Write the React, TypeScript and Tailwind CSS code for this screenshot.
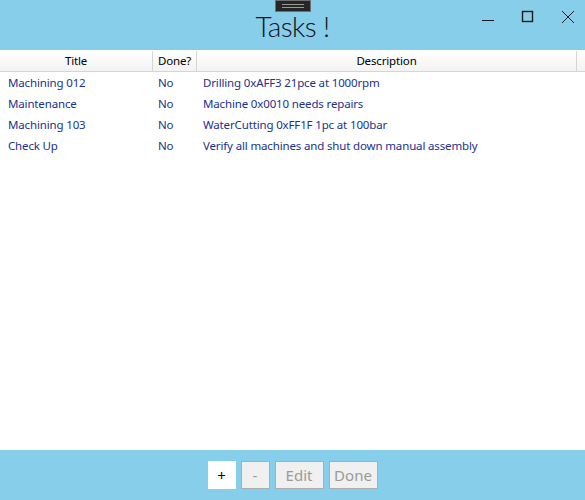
import { Fragment } from "react";

const tasks = [
  { title: "Machining 012", done: "No", description: "Drilling 0xAFF3 21pce at 1000rpm" },
  { title: "Maintenance", done: "No", description: "Machine 0x0010 needs repairs" },
  { title: "Machining 103", done: "No", description: "WaterCutting 0xFF1F 1pc at 100bar" },
  { title: "Check Up", done: "No", description: "Verify all machines and shut down manual assembly" },
];

function WindowControls() {
  return (
    <div className="absolute right-[-3px] top-0 flex h-[34px] items-center">
      <div className="flex h-full w-[40px] items-center justify-center">
        <svg width="14" height="14" viewBox="0 0 14 14">
          <path d="M1 10.5h12" stroke="#1a1a1a" strokeWidth="1" />
        </svg>
      </div>
      <div className="flex h-full w-[40px] items-center justify-center">
        <svg width="14" height="14" viewBox="0 0 14 14">
          <rect x="1.5" y="1.5" width="10" height="10" fill="none" stroke="#1a1a1a" strokeWidth="1.4" />
        </svg>
      </div>
      <div className="flex h-full w-[40px] items-center justify-center">
        <svg width="14" height="14" viewBox="0 0 14 14">
          <path d="M1 1l12 12M13 1L1 13" stroke="#1a1a1a" strokeWidth="1" />
        </svg>
      </div>
    </div>
  );
}

export default function App() {
  return (
    <div
      className="flex h-[500px] w-[585px] flex-col bg-white"
      style={{ fontFamily: '"Noto Sans", "Open Sans", sans-serif' }}
    >
      {/* title bar */}
      <div className="relative flex h-[50px] shrink-0 items-start justify-center bg-[#87ceeb]">
        <div className="absolute left-[275px] top-0 flex h-[12px] w-[36px] flex-col items-center justify-center gap-[2px] border border-[#6e6e6e] bg-[#262626]">
          <div className="h-px w-[22px] bg-[#9a9a9a]" />
          <div className="h-px w-[22px] bg-[#9a9a9a]" />
        </div>
        <div
          className="mt-[8px] text-[28px] font-light leading-[36px] tracking-[-0.6px] text-[#111]"
          style={{ fontFamily: 'Lato, "Noto Sans", sans-serif' }}
        >
          Tasks !
        </div>
        <WindowControls />
      </div>

      {/* grid */}
      <div className="flex-1 pt-px">
        <div className="grid grid-cols-[153px_44px_380px_8px] text-[11.5px] tracking-[-0.15px]">
          <div className="flex h-[21px] items-center justify-center border-b border-r border-[#d5d5d5] bg-gradient-to-b from-white to-[#f3f3f3] text-black">
            Title
          </div>
          <div className="flex h-[21px] items-center justify-center border-b border-r border-[#d5d5d5] bg-gradient-to-b from-white to-[#f3f3f3] text-black">
            Done?
          </div>
          <div className="flex h-[21px] items-center justify-center border-b border-r border-[#d5d5d5] bg-gradient-to-b from-white to-[#f3f3f3] text-black">
            Description
          </div>
          <div className="h-[21px] border-b border-[#d5d5d5] bg-gradient-to-b from-white to-[#f3f3f3]" />
          {tasks.map((t) => (
            <Fragment key={t.title}>
              <div className="flex h-[21px] items-center pl-[8px] text-[#1b318c]">{t.title}</div>
              <div className="flex h-[21px] items-center pl-[5px] text-[#1b318c]">{t.done}</div>
              <div className="flex h-[21px] items-center whitespace-nowrap pl-[6px] text-[#1b318c]">{t.description}</div>
              <div />
            </Fragment>
          ))}
        </div>
      </div>

      {/* bottom bar */}
      <div className="flex h-[50px] shrink-0 items-center justify-center gap-[5px] bg-[#87ceeb] text-[15px]">
        <button className="flex h-[28px] w-[28px] items-center justify-center bg-white text-black">+</button>
        <button className="flex h-[28px] w-[29px] items-center justify-center border border-[#adadad] bg-[#f0f0f0] text-[#9a9a9a]">
          -
        </button>
        <button className="flex h-[28px] w-[49px] items-center justify-center border border-[#adadad] bg-[#f0f0f0] text-[#9a9a9a]">
          Edit
        </button>
        <button className="flex h-[28px] w-[49px] items-center justify-center border border-[#adadad] bg-[#f0f0f0] text-[#9a9a9a]">
          Done
        </button>
      </div>
    </div>
  );
}
